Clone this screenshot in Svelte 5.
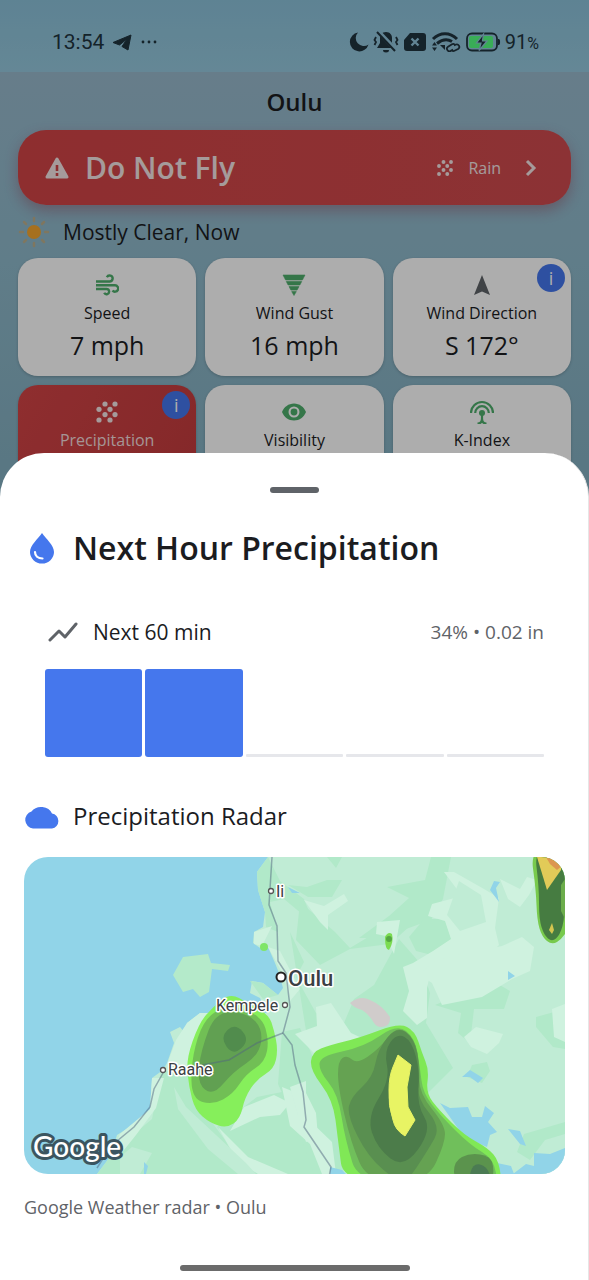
<script lang="ts">
	interface Tile {
		icon: string;
		label: string;
		value: string;
		info?: boolean;
		alert?: boolean;
	}

	interface Cell {
		fill: string;
		points: number[][];
	}

	const tiles: Tile[] = [
		{ icon: 'wind', label: 'Speed', value: '7 mph' },
		{ icon: 'gust', label: 'Wind Gust', value: '16 mph' },
		{ icon: 'direction', label: 'Wind Direction', value: 'S 172°', info: true },
		{ icon: 'rain', label: 'Precipitation', value: '34%', info: true, alert: true },
		{ icon: 'eye', label: 'Visibility', value: '10 mi' },
		{ icon: 'antenna', label: 'K-Index', value: '2' }
	];

	// share of the chart height for each 12 minute slot
	const slots: number[] = [100, 100, 0, 0, 0];

	// rain cells, lightest intensity first
	const cells: Cell[] = [
		{ fill: '#86ef5b', points: [[206, 136], [224, 146], [245, 158], [250, 173], [254, 193], [250, 212], [233, 222], [221, 240], [216, 262], [203, 271], [186, 266], [171, 253], [165, 230], [162, 203], [175, 166], [189, 150]] },
		{ fill: '#71bf55', points: [[190, 154], [210, 148], [238, 160], [245, 183], [241, 205], [222, 217], [209, 237], [189, 248], [168, 242], [167, 207], [176, 171]] },
		{ fill: '#61a052', points: [[192, 154], [224, 156], [239, 173], [235, 198], [209, 215], [189, 239], [173, 226], [177, 193]] },
		{ fill: '#518c4d', points: [[211, 166], [226, 183], [209, 199], [196, 180]] },
		{ fill: '#80e856', points: [[375, 166], [391, 174], [398, 196], [405, 213], [402, 236], [415, 253], [440, 278], [464, 291], [475, 304], [478, 330], [320, 330], [314, 283], [309, 243], [286, 213], [288, 195], [306, 188], [335, 181]] },
		{ fill: '#70bf5b', points: [[373, 167], [391, 181], [396, 211], [399, 236], [416, 258], [446, 288], [470, 302], [474, 330], [336, 330], [321, 282], [314, 237], [295, 214], [296, 199], [340, 190]] },
		{ fill: '#65a252', points: [[373, 168], [391, 182], [396, 210], [395, 236], [421, 268], [421, 286], [403, 325], [344, 325], [327, 286], [314, 230], [314, 204], [323, 198], [333, 207], [355, 192]] },
		{ fill: '#598f50', points: [[373, 169], [390, 181], [396, 210], [392, 240], [417, 270], [404, 293], [383, 325], [374, 325], [344, 300], [323, 258], [327, 240], [349, 220], [354, 192]] },
		{ fill: '#4c7c4a', points: [[373, 176], [388, 184], [396, 216], [393, 248], [408, 273], [380, 312], [353, 291], [343, 260], [366, 223], [360, 194]] },
		{ fill: '#5b934d', points: [[430, 325], [430, 304], [446, 296], [466, 299], [470, 311], [468, 325]] },
		{ fill: '#4b7b53', points: [[444, 325], [449, 306], [463, 309], [468, 325]] },
		{ fill: '#78ca4d', points: [[506, -10], [512, 33], [513, 63], [518, 80], [528, 88], [538, 82], [548, 66], [548, -10]] },
		{ fill: '#467c41', points: [[510, -10], [515, 30], [515, 62], [520, 78], [528, 85], [536, 78], [541, 60], [538, 35], [548, -10]] }
	];

	// closed curve through the midpoints of the outline
	function smooth(points: number[][]): string {
		const mid = (a: number[], b: number[]) => `${(a[0] + b[0]) / 2} ${(a[1] + b[1]) / 2}`;
		let d = `M${mid(points[points.length - 1], points[0])}`;
		points.forEach((point, index) => {
			d += `Q${point[0]} ${point[1]} ${mid(point, points[(index + 1) % points.length])}`;
		});
		return d + 'z';
	}
</script>

{#snippet icon(name: string)}
	<svg class="icon {name}" viewBox="0 0 24 24" aria-hidden="true">
		{#if name === 'wind'}
			<path d="M1 8.5h13.5a3 3 0 1 0-2.6-4.3M1 12.3h19a3.2 3.2 0 1 1-2.5 5.2M1 16h10.5a2.6 2.6 0 1 1-2.3 3.8" fill="none" stroke="currentColor" stroke-width="2.4" />
		{:else if name === 'gust'}
			<path d="M1 2h22l-2.6 5H3.6zM4.3 8.5h15.4l-1.8 3.5H6.1zM7 13.6h10l-1.9 3.5H8.9zM9.7 18.6h4.6L12 22.5z" fill="currentColor" stroke="currentColor" stroke-width=".6" />
		{:else if name === 'direction'}
			<path d="M12 2l8 20-8-3.500L4 22z" fill="currentColor" />
		{:else if name === 'rain'}
			<g fill="currentColor">
				<circle cx="10" cy="4" r="2.6" /><circle cx="20" cy="4" r="2.6" />
				<circle cx="4" cy="9.3" r="2.6" /><circle cx="15" cy="9.3" r="2.6" />
				<circle cx="10" cy="14.6" r="2.6" /><circle cx="20" cy="14.6" r="2.6" />
				<circle cx="4" cy="20" r="2.6" /><circle cx="15" cy="20" r="2.6" />
			</g>
		{:else if name === 'eye'}
			<path d="M12 3.500C6.500 3.500 2 7 0 12c2 5 6.500 8.500 12 8.500S22 17 24 12c-2-5-6.500-8.500-12-8.500zm0 14a5.500 5.500 0 1 1 0-11 5.500 5.500 0 0 1 0 11z" fill="currentColor" />
			<circle cx="12" cy="12" r="3.400" fill="currentColor" />
		{:else if name === 'antenna'}
			<path d="M1 13a11 11 0 0 1 22 0M5.200 13a6.800 6.800 0 0 1 13.600 0M12 13v5.500M7.500 23.500c3 0 4.500-2 4.500-5 0 3 1.500 5 4.500 5" fill="none" stroke="currentColor" stroke-width="2.200" />
			<circle cx="12" cy="13" r="3" fill="currentColor" />
		{/if}
	</svg>
{/snippet}

<div class="app">
	<div class="dashboard">
		<div class="status">
			<div class="status-group">
				<span class="time">13:54</span>
				<svg width="20" height="17" viewBox="0 0 20 17" aria-hidden="true">
					<path d="M1 8.500L19 1l-3 15-6-3.500L15 5 7.500 11z" fill="currentColor" stroke="currentColor" stroke-linejoin="round" />
				</svg>
				<svg width="18" height="4" viewBox="0 0 18 4" aria-hidden="true">
					<g fill="currentColor"><circle cx="3" cy="2" r="1.400" /><circle cx="9" cy="2" r="1.400" /><circle cx="15" cy="2" r="1.400" /></g>
				</svg>
			</div>
			<div class="status-group tight">
				<svg width="20" height="20" viewBox="0 0 20 20" aria-hidden="true">
					<path d="M9 .5a9.500 9.500 0 1 0 10.500 12A8 8 0 0 1 9 .5z" fill="currentColor" />
				</svg>
				<svg width="26" height="22" viewBox="0 0 26 22" aria-hidden="true">
					<path d="M13 1c-4 0-6 3-6 6v5l-3 5h18l-3-5V7c0-3-2-6-6-6zM10 19a3 2.500 0 0 0 6 0z" fill="currentColor" />
					<path d="M3 6L1.500 9 3 11l-1.500 3M23 6l1.500 3L23 11l1.500 3" fill="none" stroke="currentColor" stroke-width="1.800" />
					<path d="M5 0l18 19" stroke="#90c3da" stroke-width="4" />
					<path d="M4 1l18 19" stroke="currentColor" stroke-width="2" />
				</svg>
				<svg width="24" height="20" viewBox="0 0 24 20" aria-hidden="true">
					<path d="M7 1h13a3 3 0 0 1 3 3v12a3 3 0 0 1-3 3H4a3 3 0 0 1-3-3V8z" fill="currentColor" />
					<path d="M8.500 6.500l7 7m0-7l-7 7" stroke="#90c3da" stroke-width="2.400" />
				</svg>
				<svg width="30" height="20" viewBox="0 0 30 20" aria-hidden="true">
					<path d="M2 7c7-7 17-7 24 0M6 11.500c5-4 10-5 15-2" fill="none" stroke="currentColor" stroke-width="3" />
					<path d="M1 13.500L3.500 10 6 13.500zM1 15.500L3.500 19 6 15.500zM9 13h5v5z" fill="currentColor" />
					<path d="M22 17.500l-2 1.200a2.500 2.500 0 0 1-3-4l4-2.400a2.500 2.500 0 0 1 3.500 1M23 13.500l2-1a2.500 2.500 0 0 1 2.500 4.200l-4 2a2.500 2.500 0 0 1-3.500-1" fill="none" stroke="currentColor" stroke-width="1.800" />
				</svg>
				<svg width="36" height="20" viewBox="0 0 36 20" aria-hidden="true">
					<rect x="2" y="1.500" width="30" height="17" rx="5" fill="none" stroke="currentColor" stroke-width="1.800" />
					<rect x="4" y="4" width="24" height="12" rx="2" fill="#55ff80" />
					<path d="M33.500 7c1.500.500 1.500 5.500 0 6z" fill="currentColor" stroke="currentColor" />
					<path d="M18.500 2l-7 9h4.500L14 18.500l8-9.500h-4.500z" fill="currentColor" stroke="#90c3da" stroke-width="1.200" />
				</svg>
				<span class="percent">91<small>%</small></span>
			</div>
		</div>

		<h1>Oulu</h1>

		<div class="content">
			<button class="verdict" type="button">
				<svg width="26" height="24" viewBox="0 0 26 24" aria-hidden="true">
					<path d="M13 3l10 18H3z" fill="currentColor" stroke="currentColor" stroke-width="3" stroke-linejoin="round" />
					<path d="M13 9v6M13 17v3" stroke="#d04548" stroke-width="2.600" />
				</svg>
				<strong>Do Not Fly</strong>
				{@render icon('rain')}
				<span>Rain</span>
				<svg width="12" height="18" viewBox="0 0 12 18" aria-hidden="true">
					<path d="M2 2l7 7-7 7" fill="none" stroke="currentColor" stroke-width="3" />
				</svg>
			</button>

			<div class="sky">
				<svg width="32" height="32" viewBox="0 0 32 32" aria-hidden="true">
					<g stroke="#e6a853" stroke-width="2.500" stroke-linecap="round" opacity=".5">
						<path d="M16 2v3M16 27v3M2 16h3M27 16h3M6 6l2 2M24 24l2 2M6 26l2-2M24 8l2-2" />
					</g>
					<circle cx="16" cy="16" r="7" fill="#f5a52e" />
				</svg>
				<span>Mostly Clear, Now</span>
			</div>

			<div class="tiles">
				{#each tiles as tile}
					<div class="tile" class:alert={tile.alert}>
						{@render icon(tile.icon)}
						<span class="label">{tile.label}</span>
						<span class="value">{tile.value}</span>
						{#if tile.info}
							<button class="info" type="button" aria-label="About {tile.label}">i</button>
						{/if}
					</div>
				{/each}
			</div>
		</div>
	</div>

	<div class="scrim"></div>

	<section class="sheet">
		<div class="handle"></div>

		<h2>
			<svg width="36" height="32" viewBox="0 0 36 32" aria-hidden="true">
				<path d="M18 1C14 7 6 13 6 20a12 11.500 0 0 0 24 0C30 13 22 7 18 1z" fill="#4577ed" />
				<path d="M11 20c0 4 3 6.500 7.500 6.500" fill="none" stroke="#fff" stroke-width="2.200" stroke-linecap="round" />
			</svg>
			Next Hour Precipitation
		</h2>

		<div class="hour">
			<div class="hour-head">
				<svg width="30" height="22" viewBox="0 0 30 22" aria-hidden="true">
					<path d="M2 19l9-9 6 6L28 3" fill="none" stroke="#5f6368" stroke-width="3" stroke-linejoin="round" stroke-linecap="round" />
				</svg>
				<span>Next 60 min</span>
				<span class="amount">34% • 0.02 in</span>
			</div>
			<div class="bars">
				{#each slots as slot}
					<div class="bar" class:dry={slot === 0} style="height: {slot}%"></div>
				{/each}
			</div>
		</div>

		<h3>
			<svg width="36" height="26" viewBox="0 0 36 26" aria-hidden="true">
				<path d="M9 25.500A8.700 8.700 0 0 1 7.500 8.500a11.500 10 0 0 1 20.500 2A7.600 7.600 0 0 1 28 25.500z" fill="#4577ed" />
			</svg>
			Precipitation Radar
		</h3>

		<div class="radar">
			<svg viewBox="0 0 541 317" preserveAspectRatio="xMidYMid slice" role="img" aria-label="Radar map around Oulu">
				<rect width="541" height="317" fill="#91d4e8" />
				<!-- land -->
				<path d="M244 0L233 15 234 33 241 55 239 70 230 75 229 86 239 93 244 90 251 106 255 116 259 131 254 138 239 126 228 124 226 136 236 141 243 156 176 156 163 166 161 176 156 170 146 175 150 186 143 206 139 213 128 221 126 253 109 268 93 278 86 300 73 317H541V0z" fill="#c0ecd5" />
				<path d="M159 100l25-3 3 9 19 2-2 6-16-2-3 23-9 5-7-8-10 3-10-17z" fill="#b4eaca" />
				<g fill="#b1e9c9">
					<path d="M244 0L233 15l1 18 7 22 1 15 12 5-8-30 14-3 30 25-10-25-24-18z" />
					<path d="M264 28l20 12h24l10-17-15 0-20 7zM276 45l35 30 15 16 20-12 40-10-20 18-40 5-30 16-24-25z" />
					<path d="M363 30l38-7 6-23h20l-8 42-12 21-50 18-22 0 30-22 20-18z" />
					<path d="M303 0h15l-6 11z" />
					<path d="M266 75l14 30-8 15 20 36 28 10 10-24 20-14 25-46 21 24 10 30-4 30 12 20 15 25-25 25-60-30-60-20z" />
					<path d="M392 94l24 6 20-19 2-9-8-10-30 0-15 18z" />
					<path d="M411 148l58-24 17 10-6 18-30 0-4 34-12-10 3-20z" />
					<path d="M512 160l29-8v40l-12-2-17-20z" />
					<path d="M137 215l28-5 3 28 33 45 20 34H73l13-17 30-28 12-10z" />
					<path d="M193 270l40-30 30-6 20 25 35 38 2 20h-90l-10-15z" />
					<path d="M258 175l18-4 16 36 22 34 12 50-12 26-24 0-18-50-18-40z" />
					<path d="M448 208l15-3 3 9-8 12-15-6z" />
					<path d="M226 124l13 2 15 12-15 4z" />
					<path d="M500 277l41-12v12l-20 6-15 20-13-8z" />
				</g>
				<g fill="#cff2df">
					<path d="M230 75l18-6-10 20-8-2zM244 90l12 4 20 38-10 12-6-25z" />
					<path d="M280 43l20 6 20-12 4 7-20 14 0 15-8-8z" />
					<path d="M430 15l30 17 15 9-4 30 4 17-12 12-55 9-5 22 0 30-10 7-14-14 6-20-6-24 10-4 20-12 18-12-6-18-17-5 4-12 30-8-18-24z" />
					<path d="M476 22l20 10 7-12 10 3-8 15-9 12-12-8z" />
					<path d="M353 65l23-2-6 34-8-18-10-2z" />
					<path d="M396 118l12 8 10 22 40-8 30-18 18-8 4-24-12-10-20 9-40 8-30 8z" />
					<path d="M292 150l15-4 20 30 13 6-25 5-24 10-20-20 22-8z" />
					<path d="M440 180l12-10 27 7-4 9-12 11-16-7zM528 152l13-5v38l-11-5z" />
					<path d="M163 166l13-10 20 0-22 36-10 18-20-5 8-22z" />
					<path d="M128 221l12 0-8 30-20 27-16 20-10 2 10-23 30-25z" />
					<path d="M258 230l20 8 4 22 26 25 4 32-14 0-12-30-20-18zM194 270l30 30 40 17-30 0-20-12z" />
					<path d="M266 230l16-6 0 12 10 20 2 24-12 5-8-27z" />
					<path d="M220 250l30-12 16 8-10 12-20 2-30 14z" />
				</g>
				<g fill="#c0ecd5">
					<path d="M150 230l12 20 30 28 30 28 10 11h-18l-30-25-30-40z" />
					<path d="M96 300l12-10 20 6-12 21-20 0z" />
					<path d="M435 24l22 14 5 27-26 9-13-16z" />
				</g>
				<!-- lakes -->
				<g fill="#91d4e8">
					<path d="M416 246l10 5 18-1 4 10h10l3-11 9 7-6 9 9 10-7 3-3 12-23-10zM438 220l8-7 13 8-5 5-8-6zM484 272l12 2 6 15-6-2z" />
					<path d="M473 306l14 3 3 8h-17zM510 296l16 1 15-6v26h-52l13-10 8 2zM306 310l12 3 4 4h-16z" />
					<path d="M466 33l4-9 6 1-4 6 3 14zM484 114l7 5-7 4zM264 30l12 6-8 0zM120 305l4 4-2 8h-2z" />
				</g>
				<path d="M326 146q10-8 20-3 12 5 20 17 0 8-4 9-8 3-12-3-5-9-12-13-8-2-12-7z" fill="#d0cccb" />

				<!-- rain -->
				{#each cells as cell}
					<path d={smooth(cell.points)} fill={cell.fill} />
				{/each}
				<path d="M374 198l13 10-4 22 1 20 7 13-10 16q-10-6-12-16-5-14-4-30 0-14 4-23z" fill="#e8f464" stroke="#e8f464" stroke-linejoin="round" />
				<path d="M537 28l4-6v40l-4-8z" fill="#6cad4b" />
				<path d="M513 0h24v13l-14 20z" fill="#e2cb58" />
				<path d="M522 0h15l2 8-6 5-7-6z" fill="#dc9650" />
				<path d="M528 66l2 7-2 4-3-4z" fill="#d4c54f" />
				<path d="M361 80q3-6 7-3 2 8-3 16-4 0-4-13z" fill="#7bdc51" />
				<circle cx="365" cy="82" r="3" fill="#54a841" />
				<circle cx="240" cy="90" r="4" fill="#7fe568" />

				<!-- roads -->
				<g fill="none" stroke="#52657f" stroke-opacity=".5" stroke-width="1.500">
					<path d="M248 0l-3 48 8 21 1 35 8 12 4 34-7 26 9 12 3 20 8 27 3 28-2 7 27 40-2 10" />
					<path d="M259 176l-26 10-28 17-27 5M139 216l-9 16-4 18-16 20-23 19-14 22" />
				</g>

				<g fill="#fff" stroke="#555" stroke-width="1.300">
					<circle cx="247" cy="34" r="2.500" />
					<circle cx="261" cy="148" r="2.500" />
					<circle cx="139" cy="213" r="2.500" />
					<circle cx="257" cy="120" r="4.500" stroke="#222" stroke-width="2" />
				</g>
				<g class="places">
					<text x="252" y="40">Ii</text>
					<text x="192" y="154">Kempele</text>
					<text x="144" y="218">Raahe</text>
					<text class="city" x="264" y="129">Oulu</text>
				</g>
				<text class="brand" x="9" y="300">Google</text>
			</svg>
		</div>

		<p class="source">Google Weather radar • Oulu</p>
		<div class="home-bar"></div>
	</section>
</div>

<style>
	:global(body) {
		margin: 0;
		background: #8ab5c8;
	}

	.app {
		position: relative;
		min-height: 100vh;
		overflow: hidden;
		font-family: 'Open Sans', 'Noto Sans', sans-serif;
		color: #1b1c1f;
		background: linear-gradient(#98b8cc 72px, #8fb9cb 240px, #84b0c1 460px);
	}

	h1,
	h2,
	h3,
	p {
		margin: 0;
	}

	button {
		border: 0;
		padding: 0;
		font: inherit;
		color: inherit;
		cursor: pointer;
	}

	.status {
		display: flex;
		justify-content: space-between;
		align-items: center;
		height: 72px;
		padding: 12px 50px 0 52px;
		box-sizing: border-box;
		font-family: Roboto, sans-serif;
		color: #20343f;
		background: linear-gradient(#8bc1d9, #95c8dd);
	}

	.status-group {
		display: flex;
		align-items: center;
		gap: 8px;
	}

	.status-group.tight {
		gap: 4px;
	}

	.time {
		font-size: 21px;
	}

	.percent {
		font-size: 20px;
	}

	.percent small {
		font-size: 16px;
	}

	h1 {
		font-size: 24px;
		font-weight: 600;
		line-height: 60px;
		text-align: center;
	}

	.content {
		margin-top: -2px;
		padding: 0 18px;
	}

	.verdict {
		display: flex;
		align-items: center;
		width: 100%;
		height: 75px;
		padding: 0 34px 0 26px;
		border-radius: 28px;
		text-align: left;
		color: #f3e5e5;
		background: linear-gradient(90deg, #d24446, #cf4b4e);
		box-shadow: 0 6px 14px rgba(150, 60, 80, 0.4);
	}

	.verdict strong {
		flex: 1;
		margin-left: 15px;
		font-size: 30px;
		font-weight: 600;
		line-height: 40px;
	}

	.verdict span {
		margin: 0 24px 0 14px;
		font-size: 16px;
	}

	.sky {
		display: flex;
		align-items: center;
		gap: 13px;
		height: 53px;
		font-size: 21px;
	}

	.tiles {
		display: grid;
		grid-template-columns: repeat(3, 1fr);
		gap: 9px;
	}

	.tile {
		position: relative;
		display: flex;
		flex-direction: column;
		align-items: center;
		height: 118px;
		padding-top: 15px;
		box-sizing: border-box;
		border-radius: 20px;
		background: #fff;
		box-shadow: 0 1px 3px rgba(0, 0, 0, 0.2);
	}

	.tile.alert {
		color: #f3dcdc;
		background: linear-gradient(120deg, #d24446, #c33b3d);
	}

	.icon {
		width: 24px;
		height: 24px;
		color: #4fae6c;
	}

	.icon.direction {
		color: #5f6368;
	}

	.icon.rain {
		color: #f3e5e5;
	}

	.verdict .icon {
		width: 18px;
		height: 18px;
	}

	.label {
		font-size: 16px;
		line-height: 32px;
	}

	.value {
		font-size: 25px;
		line-height: 32px;
	}

	.info {
		position: absolute;
		top: 6px;
		right: 6px;
		width: 28px;
		height: 28px;
		border-radius: 50%;
		font-size: 18px;
		line-height: 28px;
		color: #fff;
		background: #4577ed;
	}

	.scrim {
		position: absolute;
		inset: 0;
		background: rgba(0, 0, 0, 0.32);
	}

	.sheet {
		position: absolute;
		right: 0;
		bottom: 0;
		left: 0;
		padding: 34px 23px 9px 24px;
		border-right: 1px solid #e6e6e6;
		border-radius: 44px 44px 0 0;
		background: #fff;
	}

	.handle {
		width: 49px;
		height: 6px;
		margin: 0 auto;
		border-radius: 3px;
		background: #5f6368;
	}

	h2,
	h3 {
		display: flex;
		align-items: center;
		gap: 13px;
	}

	h2 {
		margin-top: 31px;
		font-size: 32px;
		font-weight: 600;
		line-height: 48px;
	}

	h3 {
		margin-top: 43px;
		font-size: 24px;
		font-weight: 400;
		line-height: 32px;
	}

	.hour {
		margin: 44px 21px 0;
	}

	.hour-head {
		display: flex;
		align-items: center;
		gap: 15px;
		padding-left: 3px;
		font-size: 21px;
		line-height: 32px;
	}

	.amount {
		margin-left: auto;
		font-size: 19px;
		color: #5f6368;
	}

	.bars {
		display: flex;
		align-items: flex-end;
		gap: 3px;
		height: 88px;
		margin-top: 21px;
	}

	.bar {
		flex: 1;
		border-radius: 3px;
		background: #4577ed;
	}

	.bar.dry {
		min-height: 3px;
		border-radius: 1px;
		background: #e6e7eb;
	}

	.radar {
		margin-top: 25px;
		aspect-ratio: 541 / 317;
		border-radius: 24px;
		overflow: hidden;
	}

	.radar svg {
		display: block;
		width: 100%;
		height: 100%;
	}

	.places {
		font-family: Roboto, sans-serif;
		font-size: 16px;
		fill: #3c4043;
		stroke: #fff;
		stroke-width: 3px;
		stroke-linejoin: round;
		paint-order: stroke;
	}

	.city {
		font-size: 22px;
		font-weight: 500;
	}

	.brand {
		font-family: Lato, sans-serif;
		font-size: 28px;
		font-weight: 500;
		fill: #fff;
		stroke: #3b5560;
		stroke-width: 6px;
		stroke-linejoin: round;
		paint-order: stroke;
	}

	.source {
		margin-top: 21px;
		font-size: 18px;
		line-height: 24px;
		color: #5f6368;
	}

	.home-bar {
		width: 230px;
		height: 6px;
		margin: 46px auto 0;
		border-radius: 3px;
		background: #6b6b6b;
	}
</style>
